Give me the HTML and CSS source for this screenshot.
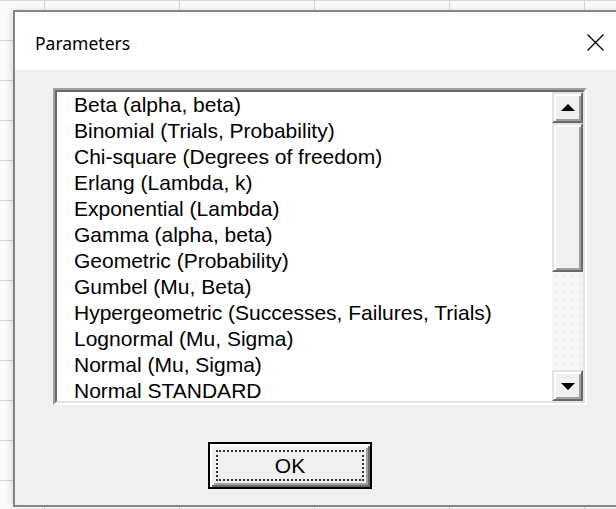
FILE: index.html
```html
<!DOCTYPE html>
<html lang="en">
<head>
<meta charset="utf-8">
<title>Parameters</title>
<link rel="stylesheet" href="styles.css">
</head>
<body>
<div class="sheet">
  <div class="dialog">
    <div class="titlebar">
      <span class="caption">Parameters</span>
      <span class="close" aria-label="Close">
        <svg width="17" height="17" viewBox="0 0 17 17"><path d="M0.5 0.5 L16.5 16.5 M16.5 0.5 L0.5 16.5" stroke="#000" stroke-width="1.3" fill="none"/></svg>
      </span>
    </div>
    <div class="client">
      <div class="listbox">
        <div class="listbox-inner">
          <ul class="items">
            <li>Beta (alpha, beta)</li>
            <li>Binomial (Trials, Probability)</li>
            <li>Chi-square (Degrees of freedom)</li>
            <li>Erlang (Lambda, k)</li>
            <li>Exponential (Lambda)</li>
            <li>Gamma (alpha, beta)</li>
            <li>Geometric (Probability)</li>
            <li>Gumbel (Mu, Beta)</li>
            <li>Hypergeometric (Successes, Failures, Trials)</li>
            <li>Lognormal (Mu, Sigma)</li>
            <li>Normal (Mu, Sigma)</li>
            <li>Normal STANDARD</li>
          </ul>
          <div class="scrollbar">
            <div class="raised arrow-btn"><span class="tri tri-up"></span></div>
            <div class="raised thumb"></div>
            <div class="track"></div>
            <div class="raised arrow-btn"><span class="tri tri-down"></span></div>
          </div>
        </div>
      </div>
      <div class="actions">
        <button class="ok-btn" type="button"><span class="focus">OK</span></button>
      </div>
    </div>
  </div>
</div>
</body>
</html>
```

FILE: styles.css
```css
html, body {
  margin: 0;
  padding: 0;
  width: 616px;
  height: 509px;
  overflow: hidden;
}

/* worksheet behind the dialog: row lines every 40px, column lines every 135px */
.sheet {
  width: 616px;
  height: 509px;
  background-color: #fbfbfb;
  background-image:
    repeating-linear-gradient(to bottom, #d6d6d6 0 1px, transparent 1px 40px),
    repeating-linear-gradient(to right, transparent 0 44px, #d6d6d6 44px 45px, transparent 45px 135px);
  padding: 10px 0 0 13px;
  box-sizing: border-box;
}

.dialog {
  width: 620px;
  height: 497px;
  box-sizing: border-box;
  border: 2px solid #858585;
  border-right: none;
  background: #f0f0f0;
  display: flex;
  flex-direction: column;
  box-shadow: -2px 0 6px rgba(0, 0, 0, 0.12);
}

.titlebar {
  height: 58px;
  flex: none;
  background: #fff;
  display: flex;
  align-items: center;
  justify-content: space-between;
  padding: 0 12px 0 20px;
  width: 601px;
  box-sizing: border-box;
}

.caption {
  font-family: "Noto Sans", "Open Sans", sans-serif;
  font-size: 17.5px;
  color: #000;
  margin-top: 3px;
}

.close {
  display: flex;
  width: 17px;
  height: 17px;
  margin-top: 3px;
}

.client {
  padding: 18px 0 0 38px;
  font-family: "Liberation Sans", Arial, sans-serif;
}

/* sunken list box frame */
.listbox {
  width: 534px;
  height: 317px;
  box-sizing: border-box;
  border: 2px solid;
  border-color: #a0a0a0 #ffffff #ffffff #a0a0a0;
}

.listbox-inner {
  height: 100%;
  box-sizing: border-box;
  border: 2px solid;
  border-color: #696969 #e3e3e3 #e3e3e3 #696969;
  background: #fff;
  display: flex;
}

.items {
  list-style: none;
  margin: 0;
  padding: 0 0 0 17px;
  flex: 1;
  overflow: hidden;
}

.items li {
  height: 26px;
  line-height: 26px;
  font-size: 21px;
  color: #000;
  white-space: nowrap;
}

.scrollbar {
  width: 31px;
  flex: none;
  display: flex;
  flex-direction: column;
}

.raised {
  box-sizing: border-box;
  background: #f0f0f0;
  border: 2px solid;
  border-color: #e3e3e3 #696969 #696969 #e3e3e3;
  box-shadow: inset 2px 2px #ffffff, inset -2px -2px #a0a0a0;
}

.arrow-btn {
  height: 31px;
  flex: none;
  display: flex;
  align-items: center;
  justify-content: center;
}

.thumb {
  height: 149px;
  flex: none;
}

.track {
  flex: 1;
  background-color: #f0f0f0;
  background-image: repeating-conic-gradient(#ffffff 0 25%, #f0f0f0 0 50%);
  background-size: 2px 2px;
}

.tri {
  width: 0;
  height: 0;
  border-left: 7px solid transparent;
  border-right: 7px solid transparent;
}

.tri-up {
  border-bottom: 7px solid #000;
  margin-top: -1px;
}

.tri-down {
  border-top: 7px solid #000;
  margin-top: 1px;
}

.actions {
  padding: 37px 0 0 155px;
}

.ok-btn {
  width: 164px;
  height: 47px;
  box-sizing: border-box;
  padding: 0;
  margin: 0;
  background: #f0f0f0;
  border: 2px solid #000;
  box-shadow: inset 2px 2px #ffffff, inset -2px -2px #696969, inset 4px 4px #f0f0f0, inset -4px -4px #a0a0a0;
  display: flex;
  align-items: stretch;
  font-family: "Liberation Sans", Arial, sans-serif;
  font-size: 21px;
  color: #000;
}

.focus {
  flex: 1;
  margin: 6px;
  border: 2px dotted #333;
  display: flex;
  align-items: center;
  justify-content: center;
}
```
